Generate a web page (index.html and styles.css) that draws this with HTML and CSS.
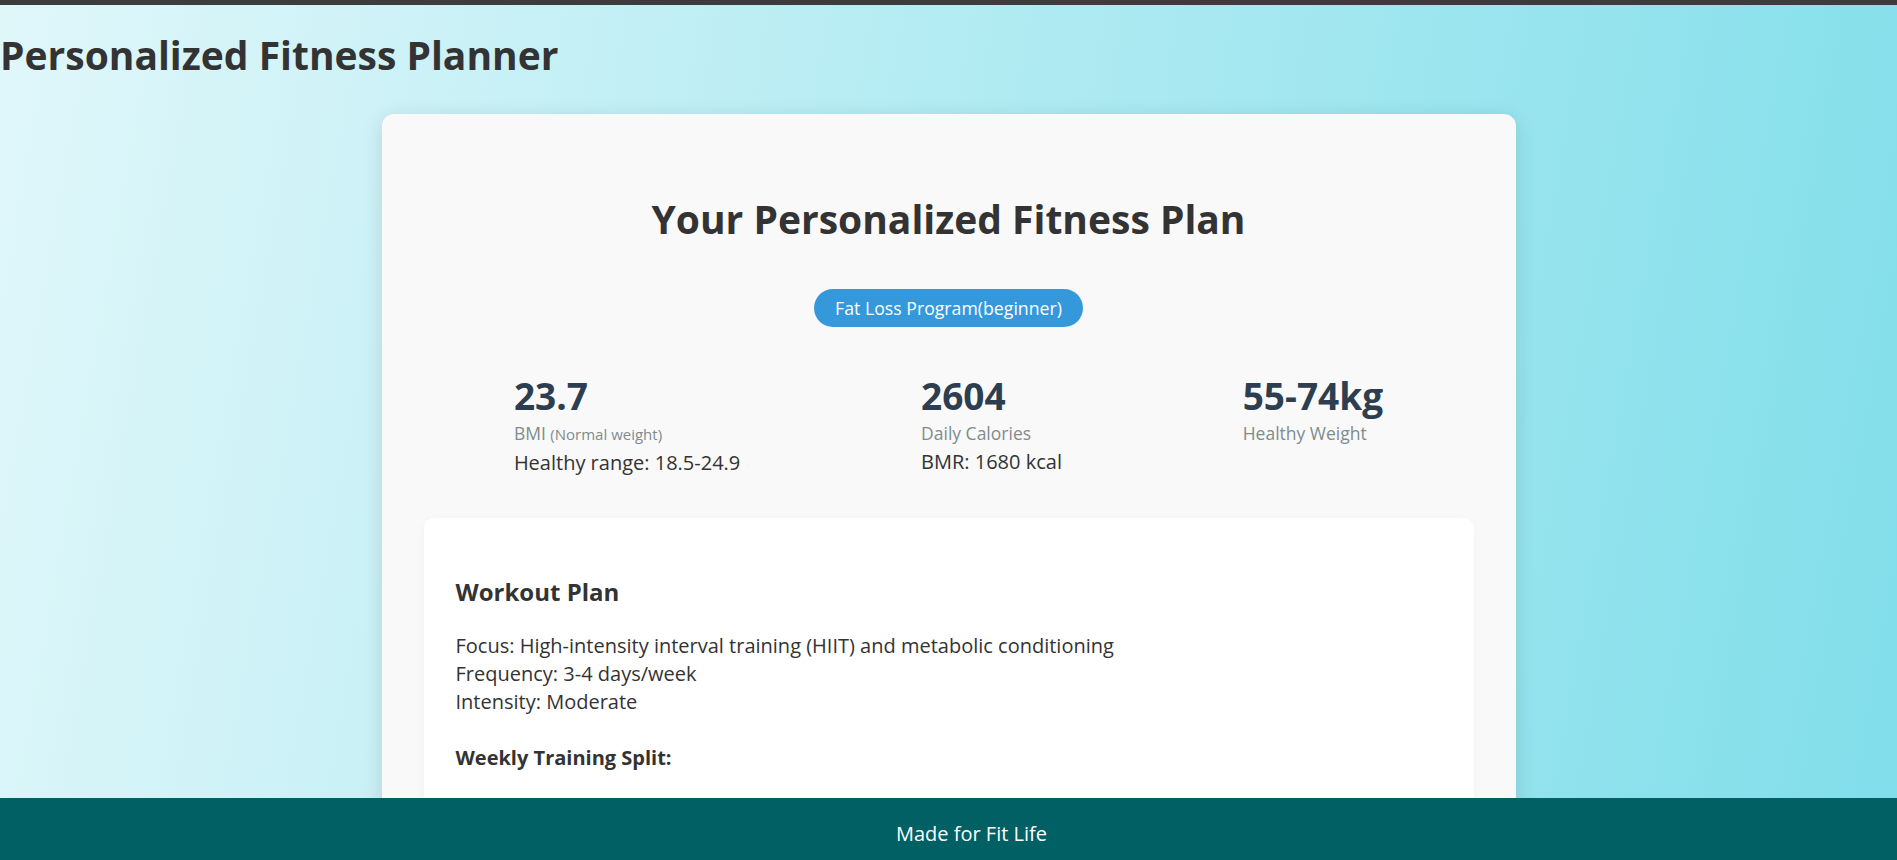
FILE: index.html
```html
<!DOCTYPE html>
<html lang="en">
<head>
<meta charset="utf-8">
<title>Personalized Fitness Planner</title>
<link rel="stylesheet" href="styles.css">
</head>
<body>
<div class="topbar"></div>
<header class="page-header">
  <h1 class="page-title">Personalized Fitness Planner</h1>
</header>
<main class="plan-card">
  <h2 class="plan-title">Your Personalized Fitness Plan</h2>
  <div class="badge-row"><span class="program-badge">Fat Loss Program(beginner)</span></div>
  <div class="stats">
    <div class="stat">
      <div class="stat-value">23.7</div>
      <div class="stat-label">BMI <small class="stat-note">(Normal weight)</small></div>
      <div class="stat-detail">Healthy range: 18.5-24.9</div>
    </div>
    <div class="stat">
      <div class="stat-value">2604</div>
      <div class="stat-label">Daily Calories</div>
      <div class="stat-detail">BMR: 1680 kcal</div>
    </div>
    <div class="stat">
      <div class="stat-value">55-74kg</div>
      <div class="stat-label">Healthy Weight</div>
    </div>
  </div>
  <section class="plan-section">
    <h3 class="section-title">Workout Plan</h3>
    <p class="section-text">Focus: High-intensity interval training (HIIT) and metabolic conditioning<br>Frequency: 3-4 days/week<br>Intensity: Moderate</p>
    <h4 class="section-subtitle">Weekly Training Split:</h4>
    <ul class="split-list">
      <li>Day 1: Full-body HIIT circuit (30 min)</li>
      <li>Day 2: Low-intensity steady-state cardio (40 min)</li>
      <li>Day 3: Rest or active recovery</li>
      <li>Day 4: Metabolic conditioning circuit (30 min)</li>
    </ul>
  </section>
</main>
<footer class="site-footer">Made for Fit Life</footer>
</body>
</html>
```

FILE: styles.css
```css
html {
  min-height: 100%;
  background: linear-gradient(100deg, #e0f7fa 0%, #80deea 100%) fixed;
}

body {
  margin: 0;
  font-family: "Open Sans", "Noto Sans", sans-serif;
  color: #333;
  font-size: 20px;
  line-height: 28px;
  padding-bottom: 120px;
}

.topbar {
  height: 5px;
  background: #3c3c3c;
}

.page-title {
  margin: 26px 0 36px;
  font-size: 39px;
  line-height: 47px;
  font-weight: 700;
  color: #333;
}

.plan-card {
  box-sizing: border-box;
  width: 1134px;
  margin: 0 auto;
  padding: 42px 42px 60px;
  background: #f9f9f9;
  border-radius: 12px;
  box-shadow: 0 4px 20px rgba(0, 0, 0, 0.12);
}

.plan-title {
  margin: 39px 0 47px;
  font-size: 39px;
  line-height: 47px;
  font-weight: 700;
  text-align: center;
  color: #333;
}

.badge-row {
  display: flex;
  justify-content: center;
}

.program-badge {
  display: block;
  padding: 8px 21px;
  font-size: 17.7px;
  line-height: 22px;
  color: #fff;
  background: #3498db;
  border-radius: 19px;
}

.stats {
  display: flex;
  justify-content: space-around;
  margin-top: 47px;
}

.stat-value {
  font-size: 37px;
  line-height: 44px;
  font-weight: 700;
  color: #2c3e50;
  margin-bottom: 3px;
}

.stat-label {
  font-size: 17.5px;
  line-height: 24px;
  color: #7f8c8d;
}

.stat-note {
  font-size: 15px;
  line-height: 24px;
}

.stat-detail {
  margin-top: 3px;
  font-size: 20px;
  line-height: 28px;
  color: #333;
}

.plan-section {
  margin-top: 41px;
  padding: 32px 32px 40px;
  background: #fff;
  border-radius: 10px;
  box-shadow: 0 2px 8px rgba(0, 0, 0, 0.04);
}

.section-title {
  margin: 26px 0 0;
  font-size: 24px;
  line-height: 32px;
  font-weight: 700;
  color: #333;
}

.section-text {
  margin: 24px 0 0;
}

.section-subtitle {
  margin: 28px 0 0;
  font-size: 20px;
  line-height: 28px;
  font-weight: 700;
}

.split-list {
  margin: 20px 0 0;
  padding-left: 28px;
}

.site-footer {
  position: fixed;
  left: 0;
  right: 0;
  bottom: 0;
  box-sizing: border-box;
  height: 62px;
  padding: 22px 0 0 46px;
  font-size: 20px;
  line-height: 28px;
  text-align: center;
  color: #fff;
  background: #006064;
}
```
